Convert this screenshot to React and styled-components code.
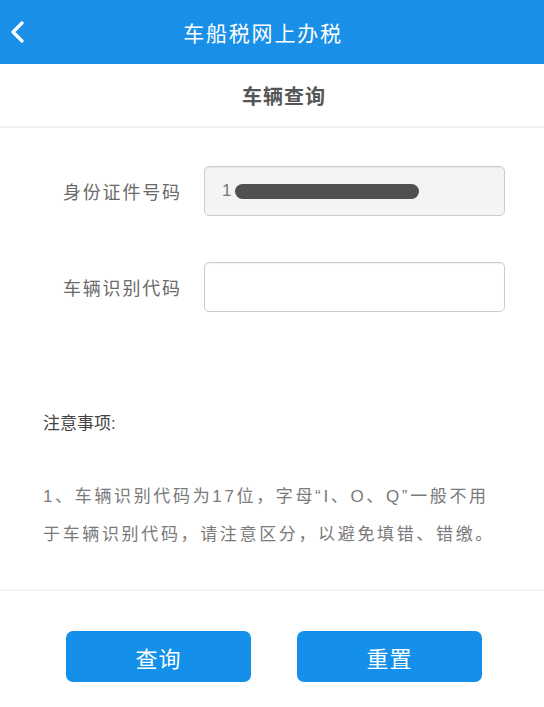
import React from 'react';
import styled, { createGlobalStyle } from 'styled-components';

const GlobalStyle = createGlobalStyle`
    html, body {
        margin: 0;
        padding: 0;
        background: #ffffff;
        font-family: 'Liberation Sans', 'Noto Sans CJK SC', sans-serif;
    }
`;

const fields = [
    { label: '身份证件号码', value: '14', masked: true, disabled: true },
    { label: '车辆识别代码', value: '', masked: false, disabled: false },
];

const BackIcon = () => (
    <svg width='16' height='22' viewBox='0 0 16 22' fill='none'>
        <path
            d='M13 2 L4 11 L13 20'
            stroke='#ffffff'
            strokeWidth='3.2'
            strokeLinecap='round'
            strokeLinejoin='round'
        />
    </svg>
);

export default function App() {
    return (
        <Page>
            <GlobalStyle />
            <Header>
                <BackButton>
                    <BackIcon />
                </BackButton>
                <Title>车船税网上办税</Title>
            </Header>
            <SubHeader>
                <SubTitle>车辆查询</SubTitle>
            </SubHeader>

            <Form>
                {fields.map((f) => (
                    <Row key={f.label}>
                        <Label>{f.label}</Label>
                        <InputBox disabled={f.disabled}>
                            {f.value && <InputText>{f.value.slice(0, 1)}</InputText>}
                            {f.masked && <Mask />}
                        </InputBox>
                    </Row>
                ))}
            </Form>

            <Notes>
                <NotesTitle>注意事项:</NotesTitle>
                <NotesText>
                    1、车辆识别代码为17位，字母“I、O、Q”一般不用
                    <br />
                    于车辆识别代码，请注意区分，以避免填错、错缴。
                </NotesText>
            </Notes>

            <Actions>
                <ActionButton>查询</ActionButton>
                <ActionButton>重置</ActionButton>
            </Actions>
        </Page>
    );
}

const Page = styled.div`
    width: 544px;
    min-height: 707px;
    background: #ffffff;
`;

const Header = styled.div`
    height: 64px;
    background: #1a8fe8;
    display: flex;
    align-items: center;
    position: relative;
`;

const BackButton = styled.div`
    position: absolute;
    left: 9px;
    top: 21px;
    display: flex;
`;

const Title = styled.div`
    flex: 1;
    text-align: center;
    color: #ffffff;
    font-size: 21px;
    letter-spacing: 1.8px;
    padding-right: 18px;
`;

const SubHeader = styled.div`
    height: 62px;
    border-bottom: 2px solid #f3f3f3;
    display: flex;
    align-items: center;
    justify-content: center;
`;

const SubTitle = styled.div`
    font-size: 20px;
    font-weight: 700;
    color: #555555;
    letter-spacing: 1px;
    padding-left: 24px;
`;

const Form = styled.div`
    display: flex;
    flex-direction: column;
    gap: 46px;
    padding: 38px 39px 0 63px;
`;

const Row = styled.div`
    display: grid;
    grid-template-columns: 141px 1fr;
    align-items: center;
`;

const Label = styled.div`
    font-size: 18px;
    color: #6a6a6a;
    letter-spacing: 1.8px;
    white-space: nowrap;
`;

const InputBox = styled.div`
    height: 48px;
    border: 1px solid #cccccc;
    border-radius: 5px;
    background: ${(p) => (p.disabled ? '#f4f4f4' : '#ffffff')};
    box-shadow: inset 0 1px 1px rgba(0, 0, 0, 0.06);
    display: flex;
    align-items: center;
    padding-left: 17px;
`;

const InputText = styled.span`
    font-size: 17px;
    color: #777777;
`;

const Mask = styled.span`
    width: 184px;
    height: 15px;
    margin-left: 4px;
    border-radius: 8px;
    background: #505050;
`;

const Notes = styled.div`
    padding: 100px 30px 35px 43px;
    border-bottom: 2px solid #f3f3f3;
`;

const NotesTitle = styled.div`
    font-size: 17px;
    line-height: 24px;
    color: #444444;
`;

const NotesText = styled.div`
    margin-top: 42px;
    font-size: 17px;
    line-height: 38px;
    letter-spacing: 2.65px;
    color: #7a7a7a;
    white-space: nowrap;
`;

const Actions = styled.div`
    display: flex;
    justify-content: center;
    gap: 46px;
    padding: 40px 0 0 4px;
`;

const ActionButton = styled.div`
    width: 185px;
    height: 51px;
    border-radius: 7px;
    background: #1490ea;
    color: #ffffff;
    font-size: 22px;
    letter-spacing: 1px;
    display: flex;
    align-items: center;
    justify-content: center;
`;
